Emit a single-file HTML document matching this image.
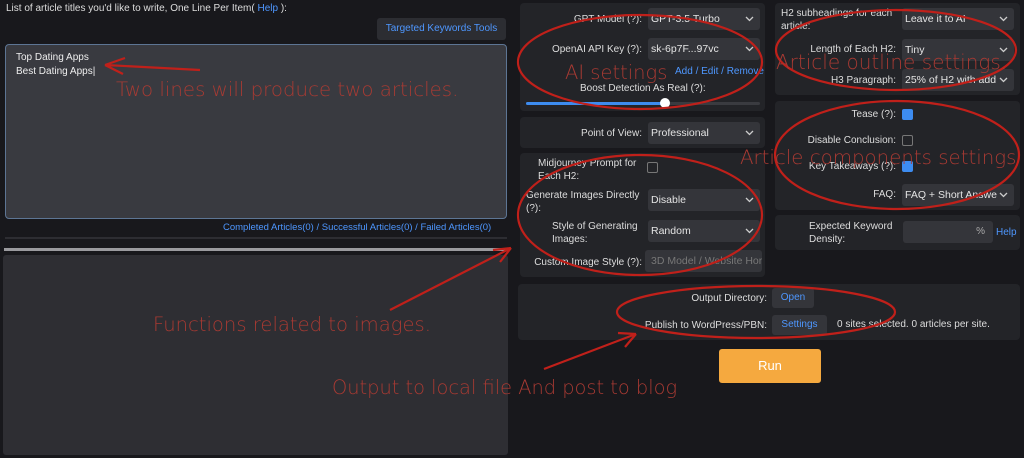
<!DOCTYPE html>
<html><head><meta charset="utf-8"><style>
*{box-sizing:border-box;margin:0;padding:0}
body{width:1024px;height:458px;background:#18181c;font-family:"Liberation Sans",sans-serif;font-size:10px;color:#ddd;position:relative;overflow:hidden}
.a{position:absolute}
.p{position:absolute;background:#232428;border-radius:4px}
.sel{position:absolute;background:#34353a;border-radius:3px;height:22px;color:#e4e4e4;font-size:10.5px;line-height:22px;padding-left:3px;white-space:nowrap;overflow:hidden}
.sel svg{position:absolute;right:6px;top:8px}
.lb{position:absolute;text-align:right;font-size:10px;color:#ddd;line-height:13px}
.bl{color:#4e97ff}
.cb{position:absolute;width:11px;height:11px;border-radius:2px}
.on{background:#3d8cf0}
.off{border:1px solid #777}
</style></head><body>
<div class="a" style="left:6px;top:3px;font-size:10px">List of article titles you'd like to write, One Line Per Item( <span class="bl">Help</span> ):</div>
<div class="a" style="left:377px;top:18px;width:129px;height:22px;background:#2c2d32;border-radius:3px;color:#4e97ff;font-size:10px;line-height:22px;text-align:center">Targeted Keywords Tools</div>
<div class="a" style="left:5px;top:44px;width:502px;height:175px;background:#393a40;border:1px solid #5d7594;border-radius:4px;padding:6px 10px;font-size:10px;line-height:13.5px;color:#eee">Top Dating Apps<br>Best Dating Apps|</div>
<div class="a" style="left:223px;top:222px;font-size:9.5px;color:#4e97ff">Completed Articles(0) / Successful Articles(0) / Failed Articles(0)</div>
<div class="a" style="left:5px;top:237px;width:502px;height:2px;background:#2d2d32"></div>
<div class="a" style="left:4px;top:248px;width:504px;height:3px;background:#9a9a9e"></div>
<div class="a" style="left:3px;top:255px;width:505px;height:200px;background:#2e2e33;border-radius:3px"></div>

<div class="p" style="left:520px;top:3px;width:245px;height:108px"></div>
<div class="lb" style="left:520px;top:13px;width:122px">GPT Model (?):</div>
<div class="sel" style="left:648px;top:8px;width:112px">GPT-3.5 Turbo<svg width="9" height="6"><path d="M1 1l3.5 3.5L8 1" stroke="#ccc" fill="none" stroke-width="1.3"/></svg></div>
<div class="lb" style="left:520px;top:43px;width:122px">OpenAI API Key (?):</div>
<div class="sel" style="left:648px;top:38px;width:112px">sk-6p7F...97vc<svg width="9" height="6"><path d="M1 1l3.5 3.5L8 1" stroke="#ccc" fill="none" stroke-width="1.3"/></svg></div>
<div class="a bl" style="left:675px;top:66px;font-size:10px">Add / Edit / Remove</div>
<div class="a" style="left:580px;top:83px;font-size:10px">Boost Detection As Real (?):</div>
<div class="a" style="left:526px;top:102px;width:234px;height:3px;background:#3a3b40;border-radius:2px"></div>
<div class="a" style="left:526px;top:102px;width:140px;height:3px;background:#3d8cf0;border-radius:2px"></div>
<div class="a" style="left:660px;top:98px;width:10px;height:10px;border-radius:50%;background:#fff"></div>

<div class="p" style="left:520px;top:117px;width:245px;height:31px"></div>
<div class="lb" style="left:520px;top:127px;width:122px">Point of View:</div>
<div class="sel" style="left:648px;top:122px;width:112px">Professional<svg width="9" height="6"><path d="M1 1l3.5 3.5L8 1" stroke="#ccc" fill="none" stroke-width="1.3"/></svg></div>

<div class="p" style="left:520px;top:153px;width:245px;height:124px"></div>
<div class="lb" style="left:520px;top:157px;width:118px;text-align:left;padding-left:18px">Midjourney Prompt for Each H2:</div>
<div class="cb off" style="left:647px;top:162px"></div>
<div class="lb" style="left:526px;top:189px;width:116px;text-align:left">Generate Images Directly (?):</div>
<div class="sel" style="left:648px;top:189px;width:112px">Disable<svg width="9" height="6"><path d="M1 1l3.5 3.5L8 1" stroke="#ccc" fill="none" stroke-width="1.3"/></svg></div>
<div class="lb" style="left:520px;top:220px;width:122px;text-align:left;padding-left:32px">Style of Generating Images:</div>
<div class="sel" style="left:648px;top:220px;width:112px">Random<svg width="9" height="6"><path d="M1 1l3.5 3.5L8 1" stroke="#ccc" fill="none" stroke-width="1.3"/></svg></div>
<div class="lb" style="left:520px;top:256px;width:122px">Custom Image Style (?):</div>
<div class="sel" style="left:645px;top:250px;width:117px;color:#777;padding-left:6px">3D Model / Website Hor</div>

<div class="p" style="left:775px;top:3px;width:245px;height:92px"></div>
<div class="lb" style="left:781px;top:7px;width:118px;text-align:left">H2 subheadings for each article:</div>
<div class="sel" style="left:902px;top:8px;width:112px">Leave it to AI<svg width="9" height="6"><path d="M1 1l3.5 3.5L8 1" stroke="#ccc" fill="none" stroke-width="1.3"/></svg></div>
<div class="lb" style="left:775px;top:43px;width:121px">Length of Each H2:</div>
<div class="sel" style="left:902px;top:39px;width:112px">Tiny<svg width="9" height="6"><path d="M1 1l3.5 3.5L8 1" stroke="#ccc" fill="none" stroke-width="1.3"/></svg></div>
<div class="lb" style="left:775px;top:74px;width:121px">H3 Paragraph:</div>
<div class="sel" style="left:902px;top:69px;width:112px">25% of H2 with add<svg width="9" height="6"><path d="M1 1l3.5 3.5L8 1" stroke="#ccc" fill="none" stroke-width="1.3"/></svg></div>

<div class="p" style="left:775px;top:101px;width:245px;height:109px"></div>
<div class="lb" style="left:775px;top:108px;width:121px">Tease (?):</div>
<div class="cb on" style="left:902px;top:109px"></div>
<div class="lb" style="left:775px;top:134px;width:121px">Disable Conclusion:</div>
<div class="cb off" style="left:902px;top:135px"></div>
<div class="lb" style="left:775px;top:160px;width:121px">Key Takeaways (?):</div>
<div class="cb on" style="left:902px;top:161px"></div>
<div class="lb" style="left:775px;top:188px;width:121px">FAQ:</div>
<div class="sel" style="left:902px;top:184px;width:112px">FAQ + Short Answe<svg width="9" height="6"><path d="M1 1l3.5 3.5L8 1" stroke="#ccc" fill="none" stroke-width="1.3"/></svg></div>

<div class="p" style="left:775px;top:215px;width:245px;height:35px"></div>
<div class="lb" style="left:809px;top:220px;width:90px;text-align:left">Expected Keyword Density:</div>
<div class="a" style="left:903px;top:221px;width:90px;height:22px;background:#34353a;border-radius:3px;text-align:right;padding-right:8px;line-height:22px;color:#aaa">%</div>
<div class="a bl" style="left:996px;top:227px">Help</div>

<div class="p" style="left:518px;top:284px;width:502px;height:56px"></div>
<div class="lb" style="left:600px;top:292px;width:167px">Output Directory:</div>
<div class="a" style="left:772px;top:288px;width:42px;height:20px;background:#34353a;border-radius:3px;color:#4e97ff;text-align:center;line-height:20px">Open</div>
<div class="lb" style="left:600px;top:319px;width:167px">Publish to WordPress/PBN:</div>
<div class="a" style="left:772px;top:315px;width:55px;height:20px;background:#34353a;border-radius:3px;color:#4e97ff;text-align:center;line-height:20px">Settings</div>
<div class="a" style="left:837px;top:319px">0 sites selected. 0 articles per site.</div>
<div class="a" style="left:719px;top:349px;width:102px;height:34px;background:#f5a93f;border-radius:3px;color:#fff;font-size:13px;text-align:center;line-height:34px">Run</div>

<svg class="a" style="left:0;top:0" width="1024" height="458">
<g fill="none" stroke="#c0201a" stroke-width="2.2">
<ellipse cx="640" cy="62" rx="122" ry="47"/>
<ellipse cx="896" cy="50" rx="120" ry="40"/>
<ellipse cx="897" cy="155" rx="122" ry="54"/>
<ellipse cx="640" cy="215" rx="122" ry="60"/>
<ellipse cx="756" cy="312" rx="139" ry="26"/>
<path d="M200 70 L105 65 M105 65 L125 58 M105 65 L123 74"/>
<path d="M390 310 L511 248 M511 248 L493 250 M511 248 L500 262"/>
<path d="M544 369 L636 334 M636 334 L618 333 M636 334 L625 347"/>
</g>
<g fill="#a83a33" font-family="DejaVu Sans,sans-serif" font-weight="300">
<text x="116" y="96" font-size="19.8">Two lines will produce two articles.</text>
<text x="565" y="79" font-size="19.5">AI settings</text>
<text x="776" y="69" font-size="20">Article outline settings.</text>
<text x="740" y="164" font-size="19.8">Article components settings</text>
<text x="153" y="331" font-size="19.6">Functions related to images.</text>
<text x="332" y="394" font-size="19.4">Output to local file And post to blog</text>
</g>
</svg>
</body></html>
